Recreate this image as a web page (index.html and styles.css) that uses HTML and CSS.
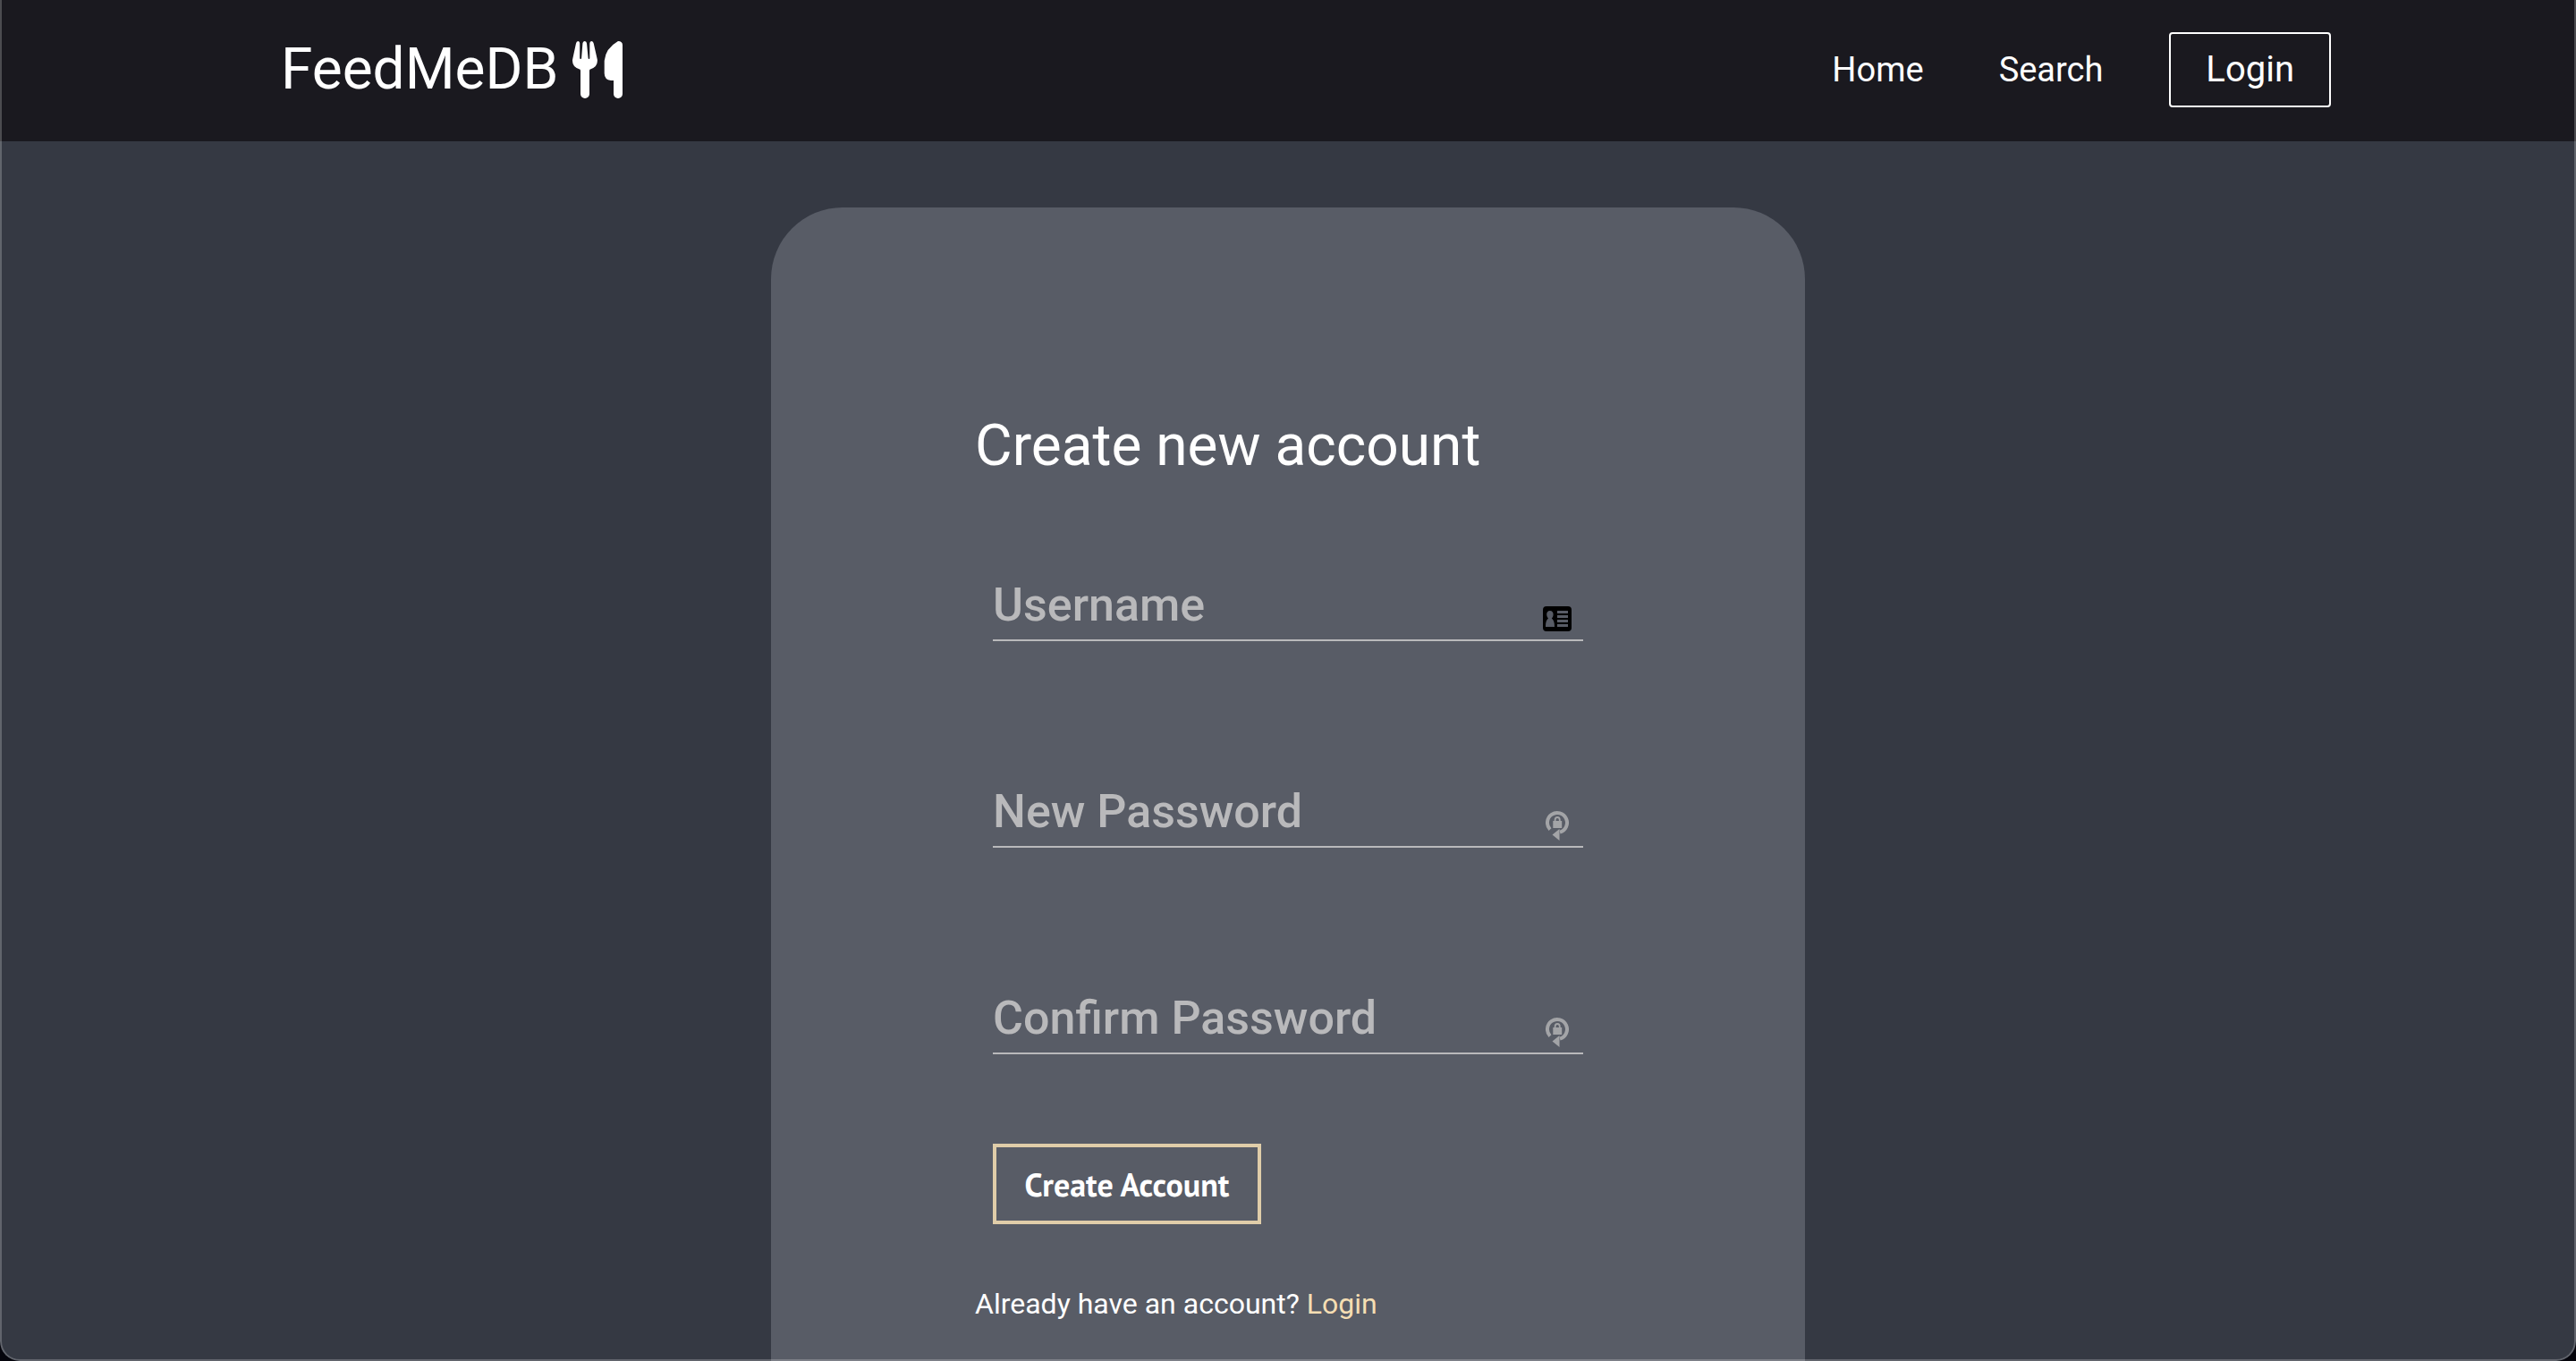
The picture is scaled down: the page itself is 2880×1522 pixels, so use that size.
FILE: index.html
```html
<!DOCTYPE html>
<html lang="en">
<head>
<meta charset="utf-8">
<meta name="viewport" content="width=device-width, initial-scale=1">
<title>FeedMeDB</title>
<link rel="stylesheet" href="styles.css">
</head>
<body>
<div class="app">
  <header class="navbar">
    <a class="brand" href="#">
      <span>FeedMeDB</span>
      <svg class="brand-icon" viewBox="0 0 56 64" aria-hidden="true">
        <path d="M4 2.5Q4.500 0 6.300 0Q8.200 0 8.200 2.500V19Q8.200 20 9.200 20Q10 20 10.100 19L11.400 2.500Q11.600 0 13.700 0Q15.800 0 16 2.500L17.600 19Q17.700 20 18.400 20Q19.300 20 19.300 19V2.500Q19.300 0 21.300 0Q23.300 0 23.700 2.500L27.800 20.500Q28.700 28.500 20.500 31.200Q19 31.500 19 33V59A5 5 0 0 1 9 59V33Q9 31.500 7.500 31.200Q-.8 28.500 .100 20.500Z"/>
        <path d="M51 0Q56 0 56 4.500V59A5 5 0 0 1 46 59V44H43Q35.700 43 35.700 36V22Q37 8 51 0Z"/>
      </svg>
    </a>
    <nav class="menu">
      <a class="menu-link" href="#">Home</a>
      <a class="menu-link" href="#">Search</a>
      <a class="menu-login" href="#">Login</a>
    </nav>
  </header>
  <main class="content">
    <form class="card">
      <h1 class="title">Create new account</h1>
      <div class="fields">
        <div class="field">
          <input class="field-input" type="text" aria-label="Username" placeholder="Username">
          <svg class="field-icon icon-card" viewBox="0 0 32 28" aria-hidden="true">
            <path fill-rule="evenodd" d="M4 0H28Q32 0 32 4V24Q32 28 28 28H4Q0 28 0 24V4Q0 0 4 0ZM7.800 5C5.400 5 4.200 7 4.200 9C4.200 11 5.200 12.500 6 13.500C3.800 15 3 18 3 23H13C13 18 12 15 9.800 13.500C10.800 12.500 11.600 11 11.600 9C11.600 7 10.400 5 7.800 5ZM16 5V8H28V5ZM16 10V13H28V10ZM16 15V18H28V15ZM16 20V23H28V20Z"/>
          </svg>
        </div>
        <div class="field">
          <input class="field-input" type="password" aria-label="New Password" placeholder="New Password">
          <svg class="field-icon icon-lock" viewBox="0 0 26 34" aria-hidden="true">
            <path class="ring" d="M5 21.600A11 11 0 1 1 16 24.600"/>
            <path d="M7.500 27.500L15.500 21V34ZM8.300 12H9.700V11Q9.700 7 13.200 7Q16.700 7 16.700 11V12H18.200V20H8.300ZM11.500 12H14.900V11Q14.900 9 13.200 9Q11.500 9 11.500 11Z"/>
          </svg>
        </div>
        <div class="field">
          <input class="field-input" type="password" aria-label="Confirm Password" placeholder="Confirm Password">
          <svg class="field-icon icon-lock" viewBox="0 0 26 34" aria-hidden="true">
            <path class="ring" d="M5 21.600A11 11 0 1 1 16 24.600"/>
            <path d="M7.500 27.500L15.500 21V34ZM8.300 12H9.700V11Q9.700 7 13.200 7Q16.700 7 16.700 11V12H18.200V20H8.300ZM11.500 12H14.900V11Q14.900 9 13.200 9Q11.500 9 11.500 11Z"/>
          </svg>
        </div>
      </div>
      <button class="submit" type="button">Create Account</button>
      <p class="hint">Already have an account? <a class="hint-link" href="#">Login</a></p>
    </form>
  </main>
</div>
</body>
</html>
```

FILE: styles.css
```css
* {
  box-sizing: border-box;
}

body {
  margin: 0;
  background: #05050c;
  color: #fff;
  font-family: Roboto, "Liberation Sans", sans-serif;
}

a {
  color: inherit;
  text-decoration: none;
}

.app {
  position: relative;
  height: 100vh;
  overflow: hidden;
  background: #353943;
  border-radius: 0 0 22px 22px;
}

/* thin light edge drawn over the window content */
.app::after {
  content: "";
  position: absolute;
  inset: 0;
  border: 2px solid rgba(255, 255, 255, 0.22);
  border-top: 0;
  border-radius: 0 0 22px 22px;
  pointer-events: none;
}

.navbar {
  display: flex;
  align-items: center;
  justify-content: space-between;
  height: 158px;
  padding: 0 274px 2px 314px;
  background: #1a191f;
}

.brand {
  display: flex;
  align-items: center;
  gap: 16px;
  font-size: 64px;
  line-height: 76px;
}

.brand-icon {
  width: 56px;
  height: 64px;
  fill: #fff;
}

.menu {
  display: flex;
  align-items: center;
}

.menu-link {
  margin-right: 84px;
  font-size: 38px;
  line-height: 48px;
}

.menu-login {
  margin-left: -10px;
  padding: 16px 39px;
  border: 2px solid #fff;
  border-radius: 4px;
  font-size: 40px;
  line-height: 48px;
}

.content {
  display: flex;
  justify-content: center;
  padding-top: 74px;
}

.card {
  width: 1156px;
  max-width: 100%;
  padding: 229px 228px 200px;
  border-radius: 80px;
  background: #585c66;
}

.title {
  margin: 0;
  font-size: 64px;
  font-weight: 400;
  line-height: 76px;
}

.fields {
  display: grid;
  gap: 151px;
  padding: 100px 20px 0;
}

.field {
  position: relative;
  display: flex;
}

.field-input {
  width: 100%;
  height: 80px;
  padding: 0;
  border: 0;
  border-bottom: 2px solid #b9b9bb;
  border-radius: 0;
  outline: 0;
  background: transparent;
  color: #fff;
  font: 500 52px/78px Roboto, "Liberation Sans", sans-serif;
}

.field-input::placeholder {
  color: #b9b9bb;
  opacity: 1;
}

.field-icon {
  position: absolute;
}

.icon-card {
  right: 13px;
  bottom: 11px;
  width: 32px;
  height: 28px;
}

.icon-lock {
  right: 16px;
  bottom: 8px;
  width: 26px;
  height: 34px;
  fill: #a3a4a7;
}

.ring {
  fill: none;
  stroke: #a3a4a7;
  stroke-width: 4;
}

.submit {
  display: block;
  width: 300px;
  height: 90px;
  margin: 100px 20px 0;
  padding: 1px 0 0;
  border: 4px solid #e0cda9;
  background: transparent;
  color: #fff;
  font: 700 36px/48px "PT Sans", "Noto Sans", sans-serif;
}

.hint {
  margin: 69px 0 0;
  font-size: 32px;
  line-height: 40px;
}

.hint-link {
  color: #f5deb3;
}
```
